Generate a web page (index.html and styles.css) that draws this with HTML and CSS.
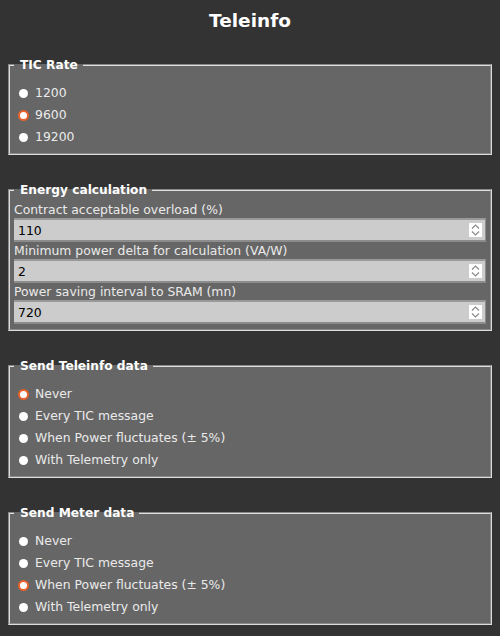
FILE: index.html
```html
<!DOCTYPE html>
<html>
<head>
<meta charset="utf-8">
<link rel="stylesheet" href="styles.css">
</head>
<body>
<h2 class="title">Teleinfo</h2>

<fieldset class="box">
  <legend class="legend">TIC Rate</legend>
  <div class="opts">
    <label class="opt"><span class="radio"></span>1200</label>
    <label class="opt"><span class="radio on"></span>9600</label>
    <label class="opt"><span class="radio"></span>19200</label>
  </div>
</fieldset>

<fieldset class="box">
  <legend class="legend">Energy calculation</legend>
  <div class="fields">
    <div class="lbl">Contract acceptable overload (%)</div>
    <div class="num"><span class="val">110</span><span class="spin"><svg width="9" height="14" viewBox="0 0 9 14"><path d="M1 5.5 L4.5 2 L8 5.5 M1 8.5 L4.5 12 L8 8.5" fill="none" stroke="#8a8a8a" stroke-width="1.2"/></svg></span></div>
    <div class="lbl">Minimum power delta for calculation (VA/W)</div>
    <div class="num"><span class="val">2</span><span class="spin"><svg width="9" height="14" viewBox="0 0 9 14"><path d="M1 5.5 L4.5 2 L8 5.5 M1 8.5 L4.5 12 L8 8.5" fill="none" stroke="#8a8a8a" stroke-width="1.2"/></svg></span></div>
    <div class="lbl">Power saving interval to SRAM (mn)</div>
    <div class="num"><span class="val">720</span><span class="spin"><svg width="9" height="14" viewBox="0 0 9 14"><path d="M1 5.5 L4.5 2 L8 5.5 M1 8.5 L4.5 12 L8 8.5" fill="none" stroke="#8a8a8a" stroke-width="1.2"/></svg></span></div>
  </div>
</fieldset>

<fieldset class="box">
  <legend class="legend">Send Teleinfo data</legend>
  <div class="opts">
    <label class="opt"><span class="radio on"></span>Never</label>
    <label class="opt"><span class="radio"></span>Every TIC message</label>
    <label class="opt"><span class="radio"></span>When Power fluctuates (± 5%)</label>
    <label class="opt"><span class="radio"></span>With Telemetry only</label>
  </div>
</fieldset>

<fieldset class="box">
  <legend class="legend">Send Meter data</legend>
  <div class="opts">
    <label class="opt"><span class="radio"></span>Never</label>
    <label class="opt"><span class="radio"></span>Every TIC message</label>
    <label class="opt"><span class="radio on"></span>When Power fluctuates (± 5%)</label>
    <label class="opt"><span class="radio"></span>With Telemetry only</label>
  </div>
</fieldset>
</body>
</html>
```

FILE: styles.css
```css
html, body {
  margin: 0;
  padding: 0;
  background: #333333;
}
body {
  padding: 0 8px;
  font-family: "DejaVu Sans", Verdana, sans-serif;
  font-size: 12.4px;
  color: #eaeaea;
}
.title {
  margin: 0;
  padding-top: 9px;
  height: 48px;
  text-align: center;
  font-size: 18.5px;
  font-weight: bold;
  line-height: 24px;
  color: #ffffff;
}
.box {
  margin: 0 0 27px 0;
  padding: 0 4px 5px 4px;
  background: #666666;
  border: 2px groove #dddddd;
  min-width: 0;
}
.legend {
  margin-left: 0;
  padding: 0 5px 0 6px;
  font-weight: bold;
  font-size: 12.2px;
  line-height: 16px;
  color: #ffffff;
}
.opts {
  display: flex;
  flex-direction: column;
  padding-top: 9px;
}
.opt {
  display: flex;
  align-items: center;
  height: 22px;
  gap: 7px;
  padding-left: 5px;
  line-height: 22px;
}
.radio {
  width: 9px;
  height: 9px;
  border-radius: 50%;
  background: #ffffff;
  box-sizing: border-box;
}
.radio.on {
  border: 2.5px solid #e8622a;
  width: 11px;
  height: 11px;
  margin-left: -1px;
  margin-right: -1px;
}
.fields {
  display: flex;
  flex-direction: column;
  padding-top: 3px;
}
.lbl {
  line-height: 17px;
  height: 17px;
  text-align: left;
}
.num {
  display: flex;
  align-items: center;
  justify-content: space-between;
  height: 24px;
  box-sizing: border-box;
  background: #cccccc;
  border-top: 2px solid #999999;
  border-bottom: 2px solid #8c8c8c;
  border-right: 1px solid #8c8c8c;
  padding: 0 3px 0 4px;
  color: #000000;
  font-size: 12.4px;
}
.spin {
  display: flex;
  align-items: center;
  justify-content: center;
  width: 13px;
  height: 14px;
  background: #ffffff;
}
.spin svg {
  display: block;
}
```
